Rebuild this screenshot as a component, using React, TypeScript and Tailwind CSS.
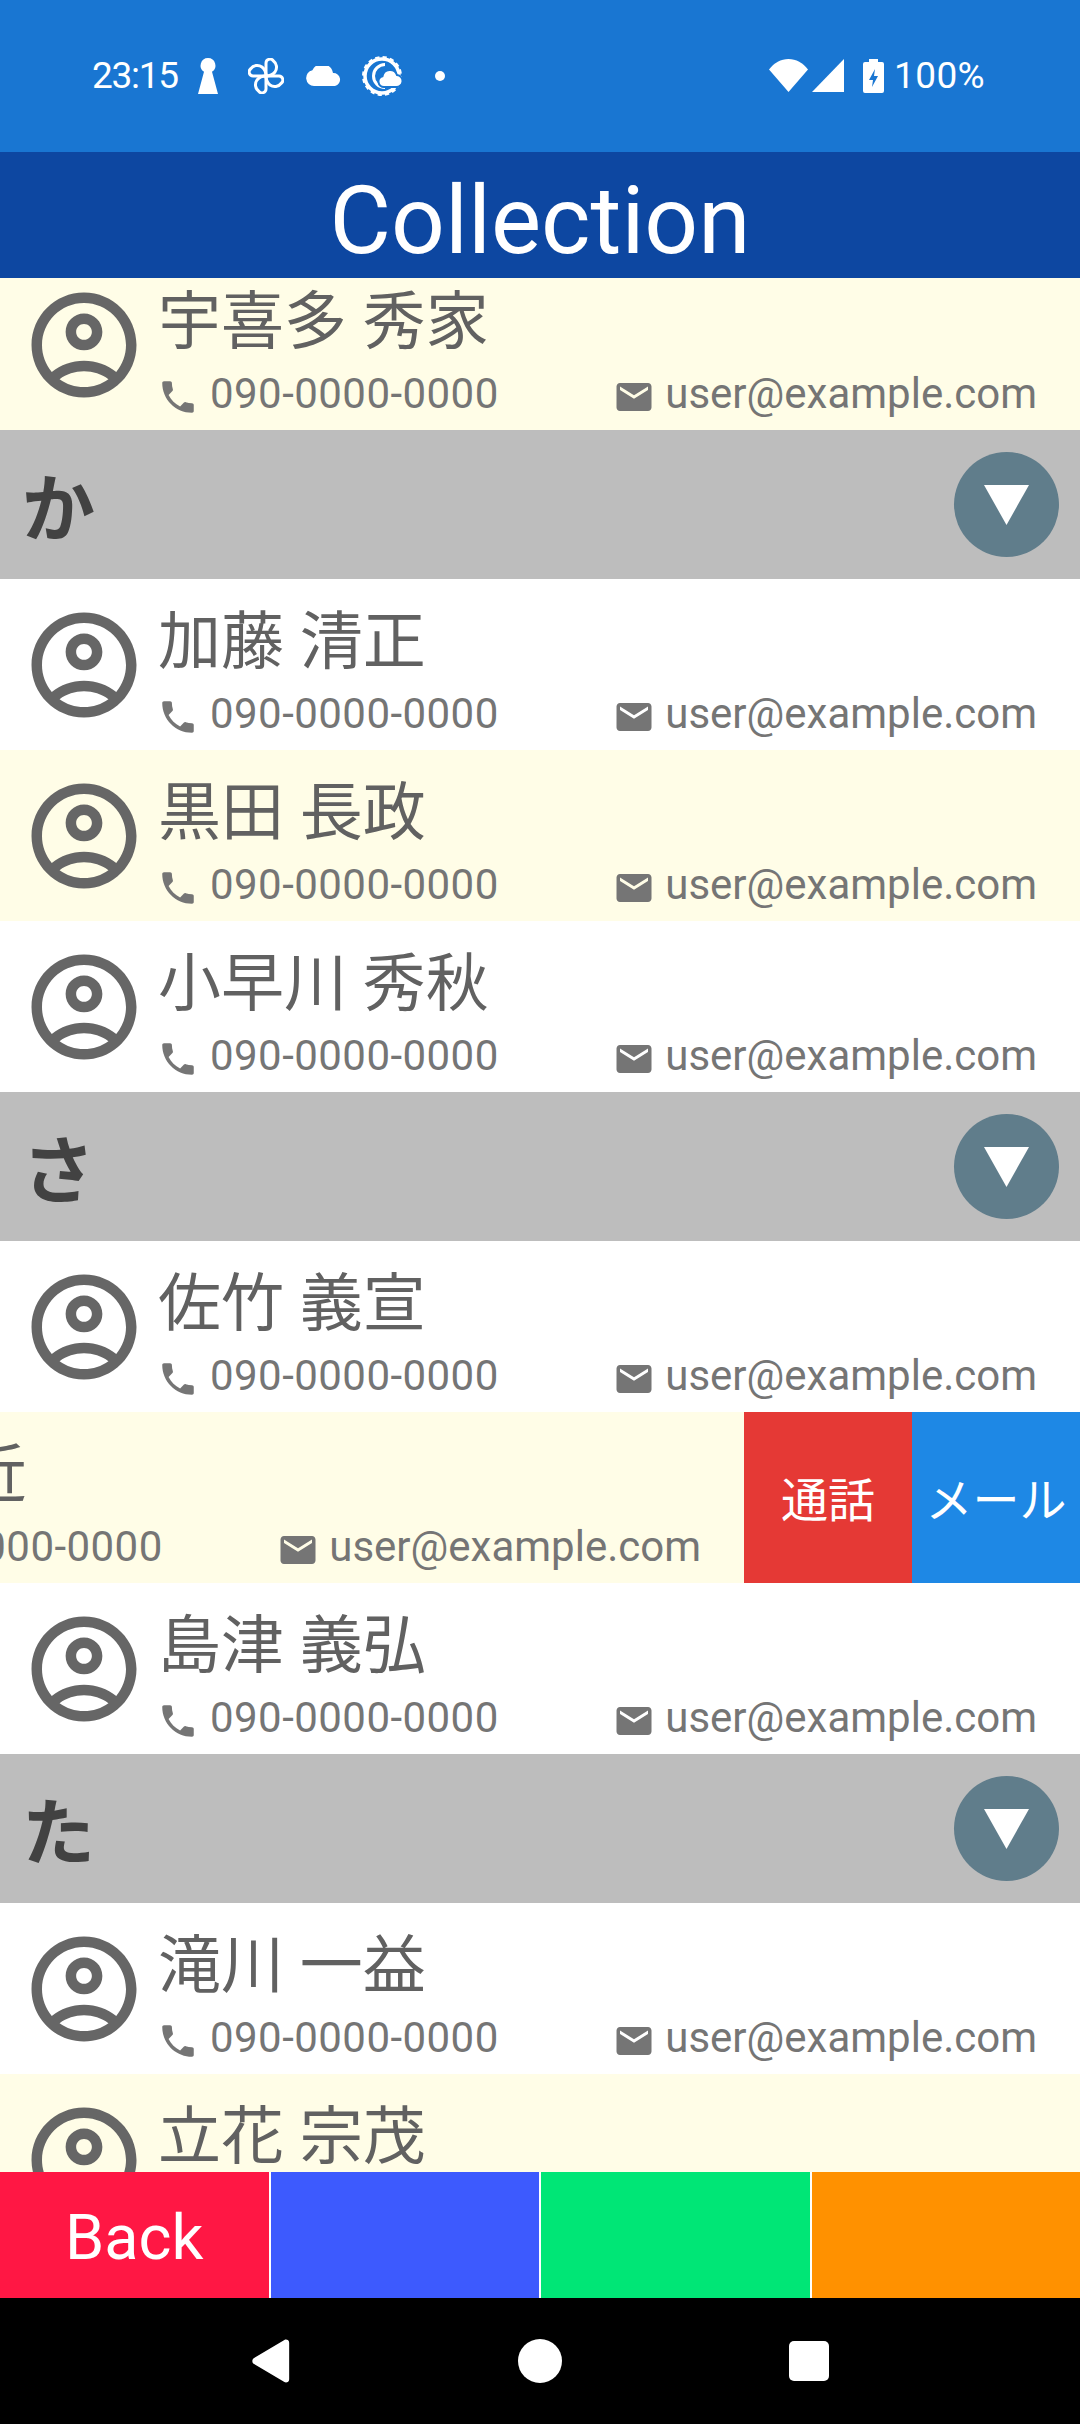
import React from 'react';

const ACCOUNT =
  'M12 2C6.48 2 2 6.48 2 12s4.48 10 10 10 10-4.48 10-10S17.52 2 12 2zM7.35 18.5C8.66 17.56 10.26 17 12 17s3.34.56 4.65 1.5C15.34 19.44 13.74 20 12 20s-3.34-.56-4.65-1.5zm10.79-1.38C16.45 15.8 14.32 15 12 15s-4.45.8-6.14 2.12C4.7 15.73 4 13.95 4 12c0-4.42 3.58-8 8-8s8 3.58 8 8c0 1.95-.7 3.73-1.86 5.12zM12 6c-1.93 0-3.5 1.57-3.5 3.5S10.07 13 12 13s3.5-1.57 3.5-3.5S13.93 6 12 6zm0 5c-.83 0-1.5-.67-1.5-1.5S11.17 8 12 8s1.5.67 1.5 1.5S12.83 11 12 11z';
const CALL =
  'M6.62 10.79c1.44 2.83 3.76 5.14 6.59 6.59l2.2-2.2c.27-.27.67-.36 1.02-.24 1.12.37 2.33.57 3.57.57.55 0 1 .45 1 1V20c0 .55-.45 1-1 1-9.39 0-17-7.61-17-17 0-.55.45-1 1-1h3.5c.55 0 1 .45 1 1 0 1.25.2 2.45.57 3.57.11.35.03.74-.25 1.02l-2.2 2.2z';
const MAIL =
  'M20 4H4c-1.1 0-1.99.9-1.99 2L2 18c0 1.1.9 2 2 2h16c1.1 0 2-.9 2-2V6c0-1.1-.9-2-2-2zm0 4l-8 5-8-5V6l8 5 8-5v2z';
const PETAL = 'M18 18V5a4 4 0 0 1 7-2.500c4 3 4.500 8 2 11.500C25 16.500 22 18 18 18z';

function StatusBar() {
  return (
    <div className="h-[152px] shrink-0 bg-[#1976D2] text-white flex items-center pl-[92px] pr-[93px] pb-[1px]">
      <span className="text-[37px] leading-none w-[85px] tracking-[-1.3px] whitespace-nowrap">23:15</span>
      <svg viewBox="0 0 20 36" className="w-[20px] h-[36px] ml-[21px]" fill="white">
        <path d="M10 0a7.500 7.500 0 0 1 4 13.800L20 36H0L6 13.800A7.500 7.500 0 0 1 10 0z" />
      </svg>
      <svg viewBox="0 0 36 36" className="w-[36px] h-[36px] ml-[30px]" fill="none" stroke="white" strokeWidth="3" strokeLinejoin="round">
        <path d={PETAL} />
        <path d={PETAL} transform="rotate(90 18 18)" />
        <path d={PETAL} transform="rotate(180 18 18)" />
        <path d={PETAL} transform="rotate(270 18 18)" />
      </svg>
      <svg viewBox="0 0 36 20" className="w-[36px] h-[20px] ml-[22px]" fill="white">
        <path d="M8 20a8 8 0 0 1-1.600-15.800A11 11 0 0 1 27 7a6.600 6.600 0 0 1 2 13z" />
      </svg>
      <svg viewBox="0 0 40 40" className="w-[40px] h-[40px] ml-[20px]">
        <circle cx="20" cy="20" r="17" fill="none" stroke="white" strokeWidth="3.500" />
        <circle cx="20" cy="20" r="18" fill="none" stroke="white" strokeWidth="4" strokeDasharray="4 3.070" />
        <path d="M23 8.500a11.500 11.500 0 1 0 0 23" fill="none" stroke="white" strokeWidth="3" />
        <path d="M22 31a5.500 5.500 0 0 1-1.500-10.800A7.500 7.500 0 0 1 35 19a6 6 0 0 1-1 12z" fill="white" stroke="#1976D2" strokeWidth="2" />
      </svg>
      <span className="w-[10px] h-[10px] rounded-full bg-white ml-[33px]" />
      <div className="flex-1" />
      <svg viewBox="0 0 39 33" className="w-[39px] h-[33px]" fill="white">
        <path d="M19.500 33L0 10.500C5 4 12 0 19.500 0S34 4 39 10.500z" />
      </svg>
      <svg viewBox="0 0 32 33" className="w-[32px] h-[33px] ml-[4px]" fill="white">
        <path d="M0 33L32 0v33z" />
      </svg>
      <svg viewBox="0 0 21 34" className="w-[21px] h-[34px] ml-[19px]" fill="white">
        <path fillRule="evenodd" d="M6 0h9v3h4a2 2 0 0 1 2 2v27a2 2 0 0 1-2 2H2a2 2 0 0 1-2-2V5a2 2 0 0 1 2-2h4zM12 10l-6 11h4l-1 7 6-11h-4z" />
      </svg>
      <span className="text-[37px] leading-none ml-[10px] w-[93px] tracking-[0.4px] whitespace-nowrap">100%</span>
    </div>
  );
}

function Row({ name, yellow, swiped }: { name: string; yellow?: boolean; swiped?: boolean }) {
  return (
    <div className={`relative h-[171px] overflow-hidden ${yellow ? 'bg-[#FFFDE7]' : 'bg-white'}`}>
      <div className={`flex h-full w-[1080px] ${swiped ? '-translate-x-[336px]' : ''}`}>
        <svg viewBox="0 0 24 24" className="w-[126px] h-[126px] ml-[21px] mt-[23px] shrink-0" fill="#666666" fillRule="evenodd">
          <path d={ACCOUNT} />
        </svg>
        <div className="flex-1 min-w-0 pl-[11px] pr-[43px] pt-[26px]">
          <div className="text-[63px] leading-[74px] text-[#616161] whitespace-nowrap">{name}</div>
          <div className="flex items-center justify-between mt-[10px] text-[42px] leading-[50px] text-[#757575]">
            <div className="flex items-center">
              <svg viewBox="0 0 24 24" className="w-[42px] h-[42px] mt-[6px] -ml-[1px]" fill="#757575">
                <path d={CALL} />
              </svg>
              <span className="ml-[11px] tracking-[0.45px]">090-0000-0000</span>
            </div>
            <div className="flex items-center">
              <svg viewBox="0 0 24 24" className="w-[42px] h-[42px] mt-[6px]" fill="#757575">
                <path d={MAIL} />
              </svg>
              <span className="ml-[10px]">user@example.com</span>
            </div>
          </div>
        </div>
      </div>
      {swiped && (
        <div className="absolute right-0 top-0 bottom-0 flex text-white text-[47px]">
          <div className="w-[168px] bg-[#E53935] flex items-center justify-center pt-[8px]">通話</div>
          <div className="w-[168px] bg-[#1E88E5] flex items-center justify-center pt-[8px] whitespace-nowrap">メール</div>
        </div>
      )}
    </div>
  );
}

function Section({ kana }: { kana: string }) {
  return (
    <div className="h-[149px] bg-[#BDBDBD] flex items-center justify-between pl-[22px] pr-[21px]">
      <span className="text-[73px] leading-none font-bold text-[#424242] mt-[12px]">{kana}</span>
      <div className="w-[105px] h-[105px] rounded-full bg-[#607D8B] flex items-center justify-center">
        <svg viewBox="0 0 45 40" className="w-[45px] h-[40px] mt-[1px]" fill="white">
          <path d="M0 0h45L22.500 40z" />
        </svg>
      </div>
    </div>
  );
}

export default function App() {
  return (
    <div
      className="w-[1080px] h-[2424px] flex flex-col overflow-hidden bg-white"
      style={{ fontFamily: 'Roboto, "Noto Sans CJK JP", sans-serif' }}
    >
      <StatusBar />
      <div className="h-[126px] shrink-0 bg-[#0D47A1] text-white text-[94.5px] leading-[114px] pt-[12px] text-center">Collection</div>

      <div className="flex-1 min-h-0 overflow-hidden">
        <div className="-mt-[19px]">
          <Row name="宇喜多 秀家" yellow />
          <Section kana="か" />
          <Row name="加藤 清正" />
          <Row name="黒田 長政" yellow />
          <Row name="小早川 秀秋" />
          <Section kana="さ" />
          <Row name="佐竹 義宣" />
          <Row name="島 左近" yellow swiped />
          <Row name="島津 義弘" />
          <Section kana="た" />
          <Row name="滝川 一益" />
          <Row name="立花 宗茂" yellow />
        </div>
      </div>

      <div className="h-[126px] shrink-0 flex gap-[2px] bg-white">
        <div className="flex-1 bg-[#FF1744] text-white text-[63px] flex items-center justify-center pt-[6px]">Back</div>
        <div className="flex-1 bg-[#3D5AFE]" />
        <div className="flex-1 bg-[#00E676]" />
        <div className="flex-1 bg-[#FF9100]" />
      </div>

      <div className="h-[126px] shrink-0 bg-black flex items-center justify-center gap-[227px]">
        <svg viewBox="0 0 40 46" className="w-[40px] h-[44px]" fill="white">
          <path d="M2 20L34 1c2-1 5 0 5 3v38c0 3-3 4-5 3L2 26c-2-1-2-5 0-6z" />
        </svg>
        <div className="w-[44px] h-[44px] rounded-full bg-white" />
        <div className="w-[40px] h-[40px] rounded-[5px] bg-white" />
      </div>
    </div>
  );
}
